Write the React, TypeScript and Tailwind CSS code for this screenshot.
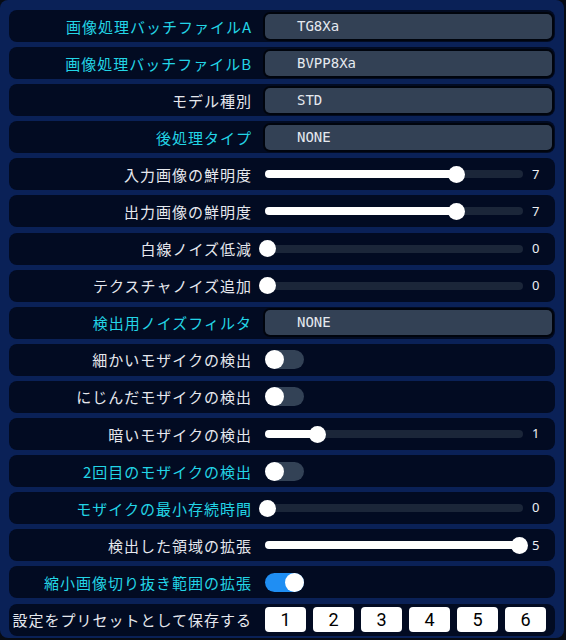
import React from "react";

type Row =
  | { label: string; cyan?: boolean; kind: "select"; value: string }
  | { label: string; cyan?: boolean; kind: "slider"; pct: number; value: string }
  | { label: string; cyan?: boolean; kind: "toggle"; on: boolean }
  | { label: string; cyan?: boolean; kind: "buttons" };

const rows: Row[] = [
  { label: "画像処理バッチファイルA", cyan: true, kind: "select", value: "TG8Xa" },
  { label: "画像処理バッチファイルB", cyan: true, kind: "select", value: "BVPP8Xa" },
  { label: "モデル種別", kind: "select", value: "STD" },
  { label: "後処理タイプ", cyan: true, kind: "select", value: "NONE" },
  { label: "入力画像の鮮明度", kind: "slider", pct: 0.75, value: "7" },
  { label: "出力画像の鮮明度", kind: "slider", pct: 0.75, value: "7" },
  { label: "白線ノイズ低減", kind: "slider", pct: 0, value: "0" },
  { label: "テクスチャノイズ追加", kind: "slider", pct: 0, value: "0" },
  { label: "検出用ノイズフィルタ", cyan: true, kind: "select", value: "NONE" },
  { label: "細かいモザイクの検出", kind: "toggle", on: false },
  { label: "にじんだモザイクの検出", kind: "toggle", on: false },
  { label: "暗いモザイクの検出", kind: "slider", pct: 0.2, value: "1" },
  { label: "2回目のモザイクの検出", cyan: true, kind: "toggle", on: false },
  { label: "モザイクの最小存続時間", cyan: true, kind: "slider", pct: 0, value: "0" },
  { label: "検出した領域の拡張", kind: "slider", pct: 1, value: "5" },
  { label: "縮小画像切り抜き範囲の拡張", cyan: true, kind: "toggle", on: true },
  { label: "設定をプリセットとして保存する", kind: "buttons" },
];

const jp = { fontFamily: '"Noto Sans CJK JP", "Noto Sans", sans-serif' };

function Slider({ pct, value }: { pct: number; value: string }) {
  const pos = 2 + pct * 252.5;
  return (
    <div className="flex items-center">
      <div className="relative w-[258px] h-[8px] rounded-full bg-[#1b2639]">
        <div className="absolute left-0 top-0 h-[8px] rounded-full bg-white" style={{ width: `${pos}px` }} />
        <div
          className="absolute top-[-4.5px] w-[17px] h-[17px] rounded-full bg-white"
          style={{ left: `${pos - 8.5}px` }}
        />
      </div>
      <span
        className="ml-[9px] text-[13px] text-[#eef0f4]"
        style={{ fontFamily: '"Noto Sans", "Liberation Sans", sans-serif' }}
      >
        {value}
      </span>
    </div>
  );
}

function Toggle({ on }: { on: boolean }) {
  return (
    <div
      className={`flex w-[39px] h-[19px] rounded-full ${on ? "bg-[#1f8ef3] justify-end" : "bg-[#334256] justify-start"}`}
    >
      <div className="w-[19px] h-[19px] rounded-full bg-white" />
    </div>
  );
}

export default function App() {
  return (
    <div className="w-[571px] h-[640px] bg-white">
      <div className="w-[566px] h-[640px] bg-[#070b14]">
        <div className="w-[564px] h-[638px] rounded-lg bg-[#0a2157] pt-[10px] pl-[9px] flex flex-col gap-[5.1px]">
          {rows.map((r, i) => (
            <div key={i} className="w-[546px] h-[32px] shrink-0 rounded-lg bg-[#020b22] flex items-center">
              <div
                className={`w-[243px] shrink-0 text-right text-[15px] tracking-[1px] leading-none ${r.cyan ? "text-[#22d5e6]" : "text-[#e6e8ee]"}`}
                style={jp}
              >
                {r.label}
              </div>
              <div className="ml-[13px] flex-1 flex items-center">
                {r.kind === "select" && (
                  <div
                    className="w-[287px] h-[25px] rounded-[5px] bg-[#334155] ring-2 ring-black/60 flex items-center pl-[32px] text-[14px] text-[#e5e9ef]"
                    style={{ fontFamily: '"DejaVu Sans Mono", monospace' }}
                  >
                    {r.value}
                  </div>
                )}
                {r.kind === "slider" && <Slider pct={r.pct} value={r.value} />}
                {r.kind === "toggle" && <Toggle on={r.on} />}
                {r.kind === "buttons" && (
                  <div className="flex gap-[7px]">
                    {["1", "2", "3", "4", "5", "6"].map((n) => (
                      <div
                        key={n}
                        className="w-[41px] h-[25px] rounded-[4px] bg-white flex items-center justify-center text-[18px] text-black"
                        style={{ fontFamily: 'Roboto, "Liberation Sans", sans-serif' }}
                      >
                        {n}
                      </div>
                    ))}
                  </div>
                )}
              </div>
            </div>
          ))}
        </div>
      </div>
    </div>
  );
}
